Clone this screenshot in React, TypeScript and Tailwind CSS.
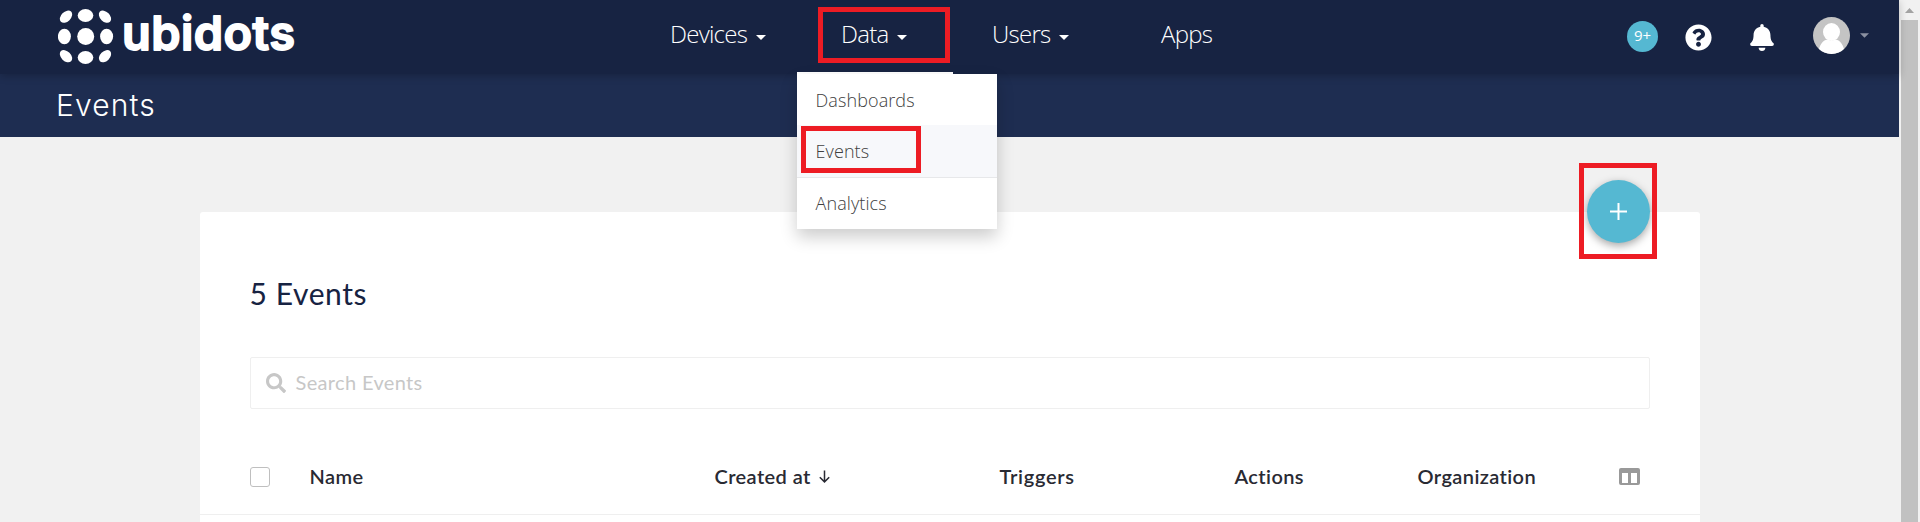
import React from "react";
import { FaBell, FaQuestionCircle, FaSearch } from "react-icons/fa";

function Logo() {
  return (
    <svg className="h-[74px] w-[260px] shrink-0" viewBox="0 0 260 74" fill="#fff">
      <ellipse cx="27.5" cy="15.5" rx="7.8" ry="6.5" />
      <circle cx="27.7" cy="36.5" r="8.5" />
      <ellipse cx="27.5" cy="57.5" rx="7.8" ry="6.5" />
      <ellipse cx="6.4" cy="36.5" rx="6.5" ry="7.8" />
      <ellipse cx="48.6" cy="36.5" rx="6.5" ry="7.8" />
      <ellipse cx="8" cy="16.7" rx="7.2" ry="4.9" transform="rotate(-45 8 16.7)" />
      <ellipse cx="47" cy="16.7" rx="7.2" ry="4.9" transform="rotate(45 47 16.7)" />
      <ellipse cx="8" cy="56.2" rx="7.2" ry="4.9" transform="rotate(45 8 56.2)" />
      <ellipse cx="47" cy="56.2" rx="7.2" ry="4.9" transform="rotate(-45 47 56.2)" />
      <text x="64" y="49.5" textLength="173" fontFamily="Inter, sans-serif" fontWeight="600" fontSize="47" stroke="#fff" strokeWidth="1.8" strokeLinejoin="round">
        ubidots
      </text>
    </svg>
  );
}

function Caret({ className }: { className: string }) {
  return (
    <svg className={className} viewBox="0 0 10 5" fill="currentColor">
      <path d="M0 0h10L5 5z" />
    </svg>
  );
}

function NavItem({ label, className, caret = true }: { label: string; className: string; caret?: boolean }) {
  return (
    <a className={`flex h-[68px] items-center ${className}`}>
      <span>{label}</span>
      {caret && <Caret className="mt-1.5 ml-[9px] h-[5px] w-2.5" />}
    </a>
  );
}

function Header() {
  return (
    <header className="relative z-10 flex h-[74px] bg-[#172342] pl-[58px] text-white shadow-[0_2px_8px_rgba(0,0,0,0.22)]">
      <Logo />
      <nav className="ml-[352px] flex w-[630px] text-[24px] font-light tracking-[-0.75px]">
        <NavItem label="Devices" className="w-[171px]" />
        <NavItem label="Data" className="w-[151px]" />
        <NavItem label="Users" className="w-[169px]" />
        <NavItem label="Apps" className="w-[139px]" caret={false} />
      </nav>
      <div className="ml-[327px] flex h-[72px] items-center">
        <span className="flex size-[31px] items-center justify-center rounded-full bg-[#55b8d2] pb-0.5 text-[15px]">9+</span>
        <FaQuestionCircle className="mt-[3px] ml-[27px] size-[27px]" />
        <FaBell className="mt-[3px] ml-[38px] h-[27px] w-[24px]" />
        <svg className="mb-px ml-[39px] size-[37px]" viewBox="0 0 37 37">
          <clipPath id="avatar">
            <circle cx="18.5" cy="18.5" r="18.5" />
          </clipPath>
          <g clipPath="url(#avatar)">
            <path fill="#c4c4c4" d="M0 0h37v37H0z" />
            <ellipse cx="18.5" cy="15" rx="8.5" ry="9" fill="#fff" />
            <path fill="#fff" d="M5 37c1-9 5-14.5 10-14.5 2 1.500 5 1.500 7 0C27 22.500 31 28 32 37z" />
          </g>
        </svg>
        <Caret className="mb-0.5 ml-[10px] h-[5px] w-[9px] text-[#8b91a1]" />
      </div>
    </header>
  );
}

function DataMenu() {
  return (
    <div className="absolute top-[72px] left-[797px] z-20 w-[200px] text-[18px] leading-[27px] font-light tracking-[0.1px] text-[#404040]">
      <div className="h-0.5 w-[156px] bg-white" />
      <div className="bg-white shadow-[0_8px_16px_rgba(0,0,0,0.2)]">
        <div className="flex h-[51px] items-center pt-px pl-[18.5px]">Dashboards</div>
        <div className="flex h-[53px] items-center border-b border-[#e7e8ea] bg-[#f7f8fb] pl-[18.5px]">Events</div>
        <div className="flex h-[51px] items-center pl-[18.5px]">Analytics</div>
      </div>
    </div>
  );
}

function EventsCard() {
  return (
    <section className="mx-auto mt-[75px] h-[310px] w-[1500px] rounded-t-[3px] bg-white font-[Lato,sans-serif] text-[20px] [font-variant-ligatures:none]">
      <div className="px-[50px] pt-[61px]">
        <h2 className="h-[84px] text-[30px] leading-[40px] text-[#172342]">
          <span className="tracking-[0.6px]">5 Events</span>
        </h2>
        <div className="flex h-[52px] items-center rounded-[2px] border border-[#efefef] pl-[15px] text-[#c7c7c7]">
          <FaSearch className="size-5" />
          <span className="mb-0.5 ml-[10px] tracking-[0.35px]">Search Events</span>
        </div>
      </div>
      <div className="mt-[31px] flex h-[75px] items-center border-b border-[#efefef] pr-[60px] pb-0.5 pl-[50px] font-semibold tracking-[0.4px] text-[#292a33]">
        <span className="mt-0.5 size-5 rounded-[3px] border border-[#bfbfbf]" />
        <span className="ml-10 w-[405px]">Name</span>
        <span className="flex w-[285px] items-center">
          Created at
          <svg className="ml-2 h-[13px] w-[11px]" viewBox="0 0 11 13" fill="none" stroke="currentColor" strokeWidth="1.5">
            <path d="M5.500 0.500v11M0.800 7.200l4.700 4.700 4.700-4.700" />
          </svg>
        </span>
        <span className="w-[235px] tracking-[0.7px]">Triggers</span>
        <span className="w-[183px]">Actions</span>
        <span>Organization</span>
        <svg className="ml-auto h-[17px] w-[21px]" viewBox="0 0 21 17">
          <path fill="#999" fillRule="evenodd" d="M2 0h17a2 2 0 0 1 2 2v13a2 2 0 0 1-2 2H2a2 2 0 0 1-2-2V2a2 2 0 0 1 2-2zM3 5v10h6V5zM12 5v10h6V5z" />
        </svg>
      </div>
    </section>
  );
}

export default function App() {
  return (
    <div className="relative flex h-[522px] w-[1920px] overflow-hidden bg-[#f1f1f1] font-['Open_Sans',sans-serif]">
      <main className="w-[1899px]">
        <Header />
        <div className="flex h-[63px] items-center bg-[#1e2d51] pl-[56px] font-[Inter,sans-serif] text-[30px] font-light tracking-[1.1px] text-white">
          <h1>Events</h1>
        </div>
        <EventsCard />
      </main>
      <aside className="flex w-[21px] flex-col pl-0.5">
        <div className="flex h-5 w-[17px] items-center justify-center">
          <svg className="h-[5px] w-[9px]" viewBox="0 0 9 5" fill="#a3a3a3">
            <path d="M0 5h9L4.500 0z" />
          </svg>
        </div>
        <div className="w-[17px] flex-1 bg-[#c1c1c1]" />
      </aside>
      <DataMenu />
      <button className="absolute top-[180px] left-[1587px] flex size-[63px] items-center justify-center rounded-full bg-[#55b8d2] shadow-[0_3px_8px_rgba(0,0,0,0.35)]">
        <svg className="size-[17px]" viewBox="0 0 17 17" stroke="#fff" strokeWidth="2">
          <path d="M8.500 0v17M0 8.500h17" />
        </svg>
      </button>
      <div className="absolute top-[7px] left-[818px] z-30 h-[56px] w-[132px] border-5 border-[#ed1c24]" />
      <div className="absolute top-[126px] left-[801px] z-30 h-[47px] w-[120px] border-5 border-[#ed1c24]" />
      <div className="absolute top-[163px] left-[1579px] z-30 h-[96px] w-[78px] border-5 border-[#ed1c24]" />
    </div>
  );
}
